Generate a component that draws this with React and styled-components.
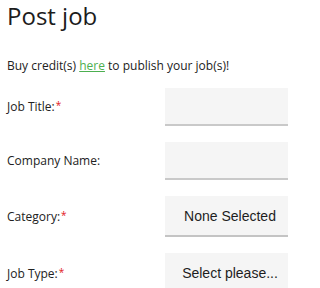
import React from "react";
import styled, { createGlobalStyle } from "styled-components";

const Global = createGlobalStyle`
  html, body { margin: 0; padding: 0; background: #fff; overflow: hidden; }
  body { font-family: "Open Sans", "Liberation Sans", sans-serif; color: #222; }
  * { box-sizing: border-box; }
`;

const Page = styled.div`
  width: 288px;
  height: 288px;
  overflow: hidden;
  padding-left: 7px;
`;

const Title = styled.h1`
  margin: 0;
  font-size: 24px;
  font-weight: 400;
  line-height: 32px;
  color: #1c1c1c;
  white-space: nowrap;
`;

const Intro = styled.p`
  margin: 26px 0 14px;
  font-size: 12px;
  line-height: 16px;
  white-space: nowrap;
`;

const Link = styled.a`
  color: #4caf50;
  text-decoration: underline;
`;

const Form = styled.form`
  display: flex;
  flex-direction: column;
  gap: 16px;
`;

const Row = styled.div`
  display: grid;
  grid-template-columns: 158px 130px;
  align-items: center;
`;

const Label = styled.label`
  font-size: 12px;
  line-height: 16px;
  color: #222;
  white-space: nowrap;
`;

const Star = styled.span`
  color: #e2161b;
  font-size: 10px;
  vertical-align: top;
  position: relative;
  top: -2px;
  margin-left: 1px;
`;

const Input = styled.input`
  width: 130px;
  height: 38px;
  border: none;
  border-bottom: 2px solid #c9c9c9;
  background: #f5f5f5;
  padding: 0 10px;
  font-family: "Liberation Sans", Arial, sans-serif;
  font-size: 14px;
  outline: none;
`;

const Select = styled.select`
  appearance: none;
  -webkit-appearance: none;
  width: 130px;
  height: 41px;
  border: none;
  border-radius: 0;
  border-bottom: 2px solid #c4c4c4;
  background: #f5f5f5;
  padding: 0;
  font-family: "Liberation Sans", Arial, sans-serif;
  font-size: 14px;
  color: #1e1e1e;
  text-align: center;
  text-align-last: center;
  outline: none;
`;

function Field({ label, required, children }) {
  return (
    <Row>
      <Label>
        {label}
        {required && <Star>*</Star>}
      </Label>
      {children}
    </Row>
  );
}

export default function App() {
  return (
    <>
      <Global />
      <Page>
        <Title>Post job</Title>
        <Intro>
          Buy credit(s) <Link href="#">here</Link> to publish your job(s)!
        </Intro>
        <Form onSubmit={(e) => e.preventDefault()}>
          <Field label="Job Title:" required>
            <Input type="text" />
          </Field>
          <Field label="Company Name:">
            <Input type="text" />
          </Field>
          <Field label="Category:" required>
            <Select defaultValue="none">
              <option value="none">None Selected</option>
            </Select>
          </Field>
          <Field label="Job Type:" required>
            <Select defaultValue="">
              <option value="">Select please...</option>
            </Select>
          </Field>
        </Form>
      </Page>
    </>
  );
}
